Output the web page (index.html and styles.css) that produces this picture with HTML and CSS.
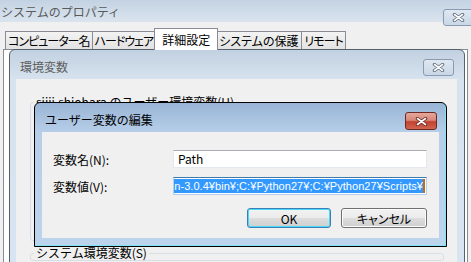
FILE: index.html
```html
<!DOCTYPE html>
<html>
<head>
    <title>ユーザー変数の編集</title>
    <link rel="stylesheet" href="styles.css">
</head>
<body>
    <div class="sys">
        <div class="sys-title">
            <span class="caption">システムのプロパティ</span>
            <span class="close sys-close">
                <svg width="13" height="9" viewBox="0 0 13 9"><path d="M2.5 1.5 L10.5 7.5 M10.5 1.5 L2.5 7.5" stroke="#5d6b7c" stroke-width="3.4" stroke-linecap="round"/><path d="M2.5 1.5 L10.5 7.5 M10.5 1.5 L2.5 7.5" stroke="#fff" stroke-width="1.6" stroke-linecap="round"/></svg>
            </span>
        </div>
        <div class="tabs">
            <div class="tab">コンピューター名</div>
            <div class="tab">ハードウェア</div>
            <div class="tab sel">詳細設定</div>
            <div class="tab wide">システムの保護</div>
            <div class="tab">リモート</div>
        </div>
        <div class="panel"></div>
    </div>

    <!-- 環境変数 dialog, behind the edit dialog -->
    <div class="win env">
        <div class="win-title">
            <span class="caption">環境変数</span>
            <span class="close">
                <svg width="13" height="9" viewBox="0 0 13 9"><path d="M2.5 1.5 L10.5 7.5 M10.5 1.5 L2.5 7.5" stroke="#5d6b7c" stroke-width="3.4" stroke-linecap="round"/><path d="M2.5 1.5 L10.5 7.5 M10.5 1.5 L2.5 7.5" stroke="#fff" stroke-width="1.6" stroke-linecap="round"/></svg>
            </span>
        </div>
        <div class="win-body">
            <fieldset class="group user-group">
                <legend>sijii.shiohara のユーザー環境変数(U)</legend>
            </fieldset>
            <fieldset class="group">
                <legend>システム環境変数(S)</legend>
            </fieldset>
        </div>
    </div>

    <!-- ユーザー変数の編集 dialog, active -->
    <div class="win edit">
        <div class="win-title">
            <span class="caption">ユーザー変数の編集</span>
            <span class="close red">
                <svg width="13" height="9" viewBox="0 0 13 9"><path d="M2.5 1.5 L10.5 7.5 M10.5 1.5 L2.5 7.5" stroke="#6b2a22" stroke-width="3.4" stroke-linecap="round"/><path d="M2.5 1.5 L10.5 7.5 M10.5 1.5 L2.5 7.5" stroke="#fff" stroke-width="1.6" stroke-linecap="round"/></svg>
            </span>
        </div>
        <div class="win-body">
            <div class="fields">
                <label for="var-name">変数名(N):</label>
                <div class="textbox" id="var-name">Path</div>
                <label for="var-value">変数値(V):</label>
                <div class="textbox focus" id="var-value"><span class="sel-text">n-3.0.4¥bin¥;C:¥Python27¥;C:¥Python27¥Scripts¥</span><span class="caret"></span></div>
            </div>
            <div class="buttons">
                <button class="btn default">OK</button>
                <button class="btn">キャンセル</button>
            </div>
        </div>
    </div>
</body>
</html>
```

FILE: styles.css
```css
/* Windows 7 basic theme: three stacked dialogs. */
body {
    margin: 0;
    width: 471px;
    height: 262px;
    overflow: hidden;
    position: relative;
    background: #f0f0f0;
    font-family: "Noto Sans CJK JP", sans-serif;
    font-size: 12px;
    color: #000;
}

/* System properties window (inactive, in the back). */
.sys-title {
    height: 22px;
    display: flex;
    justify-content: space-between;
    background: linear-gradient(#c3d2e2, #dae4ef);
}
.sys-title .caption {
    color: #5a5a5a;
    line-height: 16px;
    padding: 4px 0 0 1px;
}
.sys-close {
    margin: 9px -3px 0 0;
    height: 11px;
}
.tabs {
    display: flex;
    align-items: flex-end;
    height: 27px;
    padding-left: 6px;
}
.tab {
    height: 17px;
    line-height: 17px;
    padding: 0 2px;
    margin-left: -1px;
    border: 1px solid #898c95;
    border-bottom: none;
    background: linear-gradient(#f3f3f3, #e2e2e2);
    font-feature-settings: "palt";
    letter-spacing: -1px;
    white-space: nowrap;
}
.tab.wide {
    padding: 0 3px;
    letter-spacing: 0;
}
.tab.sel {
    position: relative;
    z-index: 1;
    height: 21px;
    line-height: 21px;
    margin: 0 -2px -1px -2px;
    padding: 0 7px;
    letter-spacing: 0;
    background: #fff;
}
.panel {
    height: 220px;
    margin: 0 3px;
    border: 1px solid #898c95;
    background: #fff;
}

/* Shared dialog frame. */
.win {
    position: absolute;
    display: flex;
    flex-direction: column;
    border: 1px solid #55606c;
    border-radius: 6px 6px 0 0;
}
.win-title {
    height: 29px;
    flex: none;
    display: flex;
    justify-content: space-between;
    align-items: flex-start;
    padding: 0 10px;
}
.win-title .caption {
    line-height: 16px;
    padding-top: 9px;
}
.close {
    width: 29px;
    height: 15px;
    margin-top: 9px;
    border: 1px solid #8a9ab0;
    border-radius: 3px;
    background: linear-gradient(#dfe8f2, #c9d7e6);
    display: flex;
    align-items: center;
    justify-content: center;
}
.win-body {
    flex: 1;
    background: #f0f0f0;
}

/* 環境変数 (inactive). */
.env {
    left: 9px;
    top: 49px;
    width: 454px;
    height: 240px;
    background: linear-gradient(#c2d1e1, #d6e2ee 29px, #d8e4f1);
}
.env .caption {
    color: #5e5e5e;
}
.env .win-body {
    margin: 0 7px 0 6px;
    padding-top: 16px;
}
.group {
    margin: 0 13px 0 14px;
    padding: 0;
    border: 1px solid #d5dfe5;
    border-radius: 3px;
}
.group legend {
    margin-left: 3px;
    padding: 0 2px;
    line-height: 14px;
}
.user-group {
    height: 144px;
    margin-bottom: 5px;
}

/* ユーザー変数の編集 (active). */
.edit {
    left: 34px;
    top: 102px;
    width: 411px;
    height: 143px;
    border-color: #000;
    background: linear-gradient(#99b5d6, #b6cee8 29px, #bcd4ec);
    box-shadow: inset -1px -1px 0 #7fe4f7;
}
.edit .win-title {
    padding-right: 9px;
}
.close.red {
    width: 30px;
    height: 16px;
    border-color: #6e2a22;
    background: linear-gradient(#e6a79c, #d7887a 45%, #c4412e 55%, #d0654f);
}
.edit .win-body {
    margin: 0 7px 8px 7px;
    padding: 18px 0 0 11px;
}
.fields {
    display: grid;
    grid-template-columns: 120px 254px;
    grid-auto-rows: 18px;
    row-gap: 9px;
    align-items: center;
}
.textbox {
    box-sizing: border-box;
    height: 18px;
    border: 1px solid #e3e9ef;
    border-top-color: #abadb3;
    background: #fff;
    line-height: 16px;
    padding: 0 4px;
    white-space: nowrap;
    overflow: hidden;
}
.textbox.focus {
    display: flex;
    justify-content: flex-end;
    align-items: center;
    padding: 0 1px;
    border-color: #b5cfe7;
    border-top-color: #3d7bad;
    font-family: "Liberation Sans", sans-serif;
    font-size: 11px;
    letter-spacing: 0.05px;
}
.sel-text {
    background: #3399ff;
    color: #fff;
    line-height: 14px;
    padding-left: 2px;
}
.caret {
    flex: none;
    width: 2px;
    height: 14px;
    background: #c46a12;
}
.buttons {
    display: flex;
    justify-content: flex-end;
    gap: 10px;
    margin: 13px 12px 0 0;
}
.btn {
    box-sizing: border-box;
    height: 20px;
    width: 84px;
    padding: 0;
    border: 1px solid #707070;
    border-radius: 3px;
    background: linear-gradient(#f2f2f2, #ebebeb 50%, #dddddd 50%, #cfcfcf);
    box-shadow: inset 0 0 0 1px #fcfcfc;
    font: inherit;
    font-feature-settings: "palt";
}
.btn + .btn {
    width: 86px;
}
.btn.default {
    border-color: #3c7fb1;
    box-shadow: inset 0 0 0 1px #48d8fb;
}
```
